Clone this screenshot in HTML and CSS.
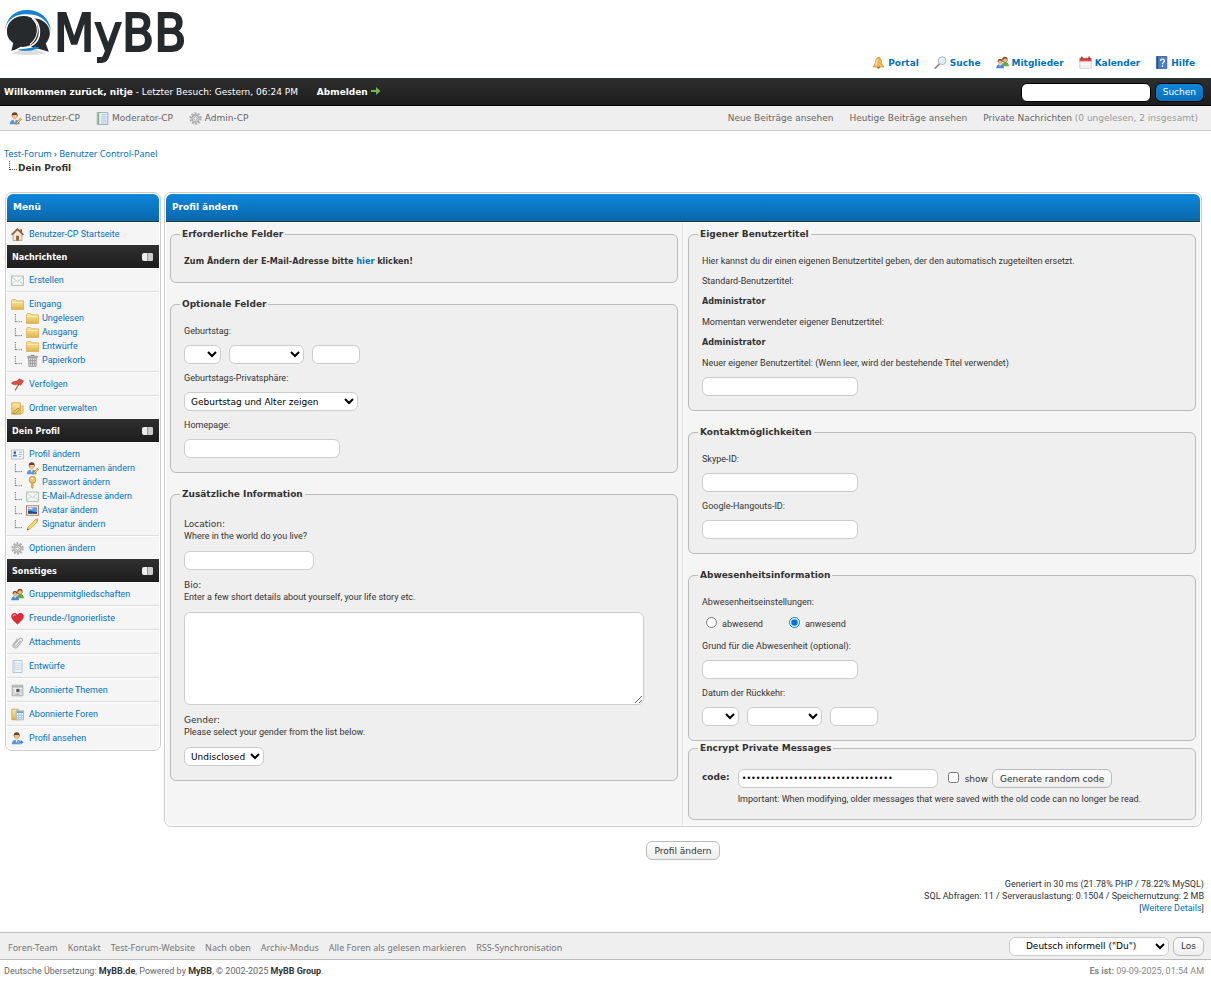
FILE: index.html
```html
<!DOCTYPE html>
<html lang="de">
	<head>
		<meta charset="UTF-8" />
		<meta name="viewport" content="width=device-width, initial-scale=1.0" />
		<title>Test-Forum - Profil ändern</title>
		<link rel="stylesheet" href="styles.css">
	</head>
	<body>
		<svg class="sprite" aria-hidden="true">
			<linearGradient id="gold" x2="0" y2="1"><stop offset="0" stop-color="#fbe9a4" /><stop offset="1" stop-color="#e0b54c" /></linearGradient>
			<symbol id="bell" viewBox="0 0 16 16">
				<circle cx="8" cy="2.4" r="1.4" fill="#d99a2b" />
				<path d="M8 2C4.800 2 4.400 5 4 8.500 3.700 11 1.500 12 1.200 13.500h13.600C14.500 12 12.300 11 12 8.500 11.600 5 11.200 2 8 2z" fill="#eab75a" stroke="#c48d34" stroke-width=".8" />
				<path d="M6.300 4C5.600 6 5.800 9 4.800 11.500" fill="none" stroke="#fff0c4" stroke-width="1.300" />
				<path d="M6 13.800a2 1.700 0 0 0 4 0z" fill="#6d5130" />
			</symbol>
			<symbol id="search" viewBox="0 0 16 16">
				<path d="M6.500 10 1.500 15" stroke="#9a8f86" stroke-width="2.200" stroke-linecap="round" />
				<circle cx="10" cy="5.800" r="4.800" fill="#dfeefa" stroke="#a5b3c2" stroke-width="1.200" />
				<path d="M7.300 5.500a3 3 0 0 1 3-2.600" fill="none" stroke="#fff" stroke-width="1.300" />
			</symbol>
			<symbol id="group" viewBox="0 0 16 16">
				<path d="M7.500 11C7.500 8.500 9 7.500 11.500 7.500S15.800 9 15.800 12.500H7.500z" fill="#65a74b" />
				<circle cx="11" cy="4.300" r="3.300" fill="#8a5225" />
				<circle cx="11.200" cy="5.200" r="2.200" fill="#f0c08c" />
				<path d="M.3 15.200C.3 11.500 2 10 5 10s4.800 1.500 4.800 5.200z" fill="#4c86cf" />
				<path d="m4 10.200 1 3 1-3z" fill="#fff" />
				<circle cx="5" cy="6.600" r="3" fill="#6b3b18" />
				<circle cx="5" cy="7.600" r="2.300" fill="#eebb88" />
			</symbol>
			<symbol id="calendar" viewBox="0 0 16 16">
				<path d="M1 6h14v9H1z" fill="#f7f7f7" stroke="#b9b9b9" stroke-width=".8" />
				<path d="M.6 2.300h14.800v4.200H.6z" fill="#d8474a" />
				<path d="M3.500.500v3.500M12.500.500v3.500" stroke="#7c2f31" stroke-width="1.600" />
				<path d="M3 9h10M3 12h10" stroke="#eee" stroke-width="1.200" />
			</symbol>
			<symbol id="help" viewBox="0 0 16 16">
				<path d="M2 .5h12.500v15H2z" fill="#4b7fc7" stroke="#30589b" />
				<path d="M2 .5h2v15H2z" fill="#28508f" />
				<path d="M6.800 6c0-3 4.700-3 4.700-.2C11.500 8 9.200 7.700 9.200 10M9.200 11.500v1.600" fill="none" stroke="#fff" stroke-width="1.600" />
			</symbol>
			<symbol id="user" viewBox="0 0 16 16">
				<path d="M1 15c0-4 2-5.500 6-5.500S13 11 13 15z" fill="#5b95da" />
				<path d="m5.700 9.500 1.300 4 1.300-4z" fill="#fff" />
				<circle cx="7" cy="4" r="3.600" fill="#6b4420" />
				<path d="M4.200 3.800h5.600C10.200 7.500 9 9.300 7 9.300S3.800 7.500 4.200 3.800z" fill="#f0bf8d" />
			</symbol>
			<symbol id="user-edit" viewBox="0 0 16 16">
				<use href="#user" />
				<path d="m14 7.500 1.500 1.300-5 5.500-2 1 .7-2.300z" fill="#f2cf55" stroke="#967521" stroke-width=".7" />
			</symbol>
			<symbol id="user-go" viewBox="0 0 16 16">
				<use href="#user" />
				<path d="M9 11.300h3V9.500l3.700 3-3.700 3v-1.900H9z" fill="#2c81d6" stroke="#fff" stroke-width=".4" />
			</symbol>
			<symbol id="modcp" viewBox="0 0 16 16">
				<path d="M1.500.5h13v15h-13z" fill="#eaf1fb" stroke="#8d9bab" />
				<path d="M2 1h2v14H2z" fill="#8bb181" />
				<path d="M6 3.500h7M6 6h7M6 8.500h7M6 11h7M6 13.500h7" stroke="#9fb8d8" />
			</symbol>
			<symbol id="gear" viewBox="0 0 16 16">
				<circle cx="8" cy="8" r="6.300" fill="none" stroke="#aaa" stroke-width="2.600" stroke-dasharray="2.300 1.658" />
				<circle cx="8" cy="8" r="4.300" fill="#ddd" stroke="#aaa" stroke-width="1.600" />
				<circle cx="8" cy="8" r="1.900" fill="#fff" stroke="#999" />
			</symbol>
			<symbol id="home" viewBox="0 0 16 16">
				<path d="M11.500 1.500h2v4h-2z" fill="#8b4a2c" />
				<path d="M2.500 8 8 2.500 13.500 8v7.500h-11z" fill="#f1e6d4" stroke="#9b8468" stroke-width=".8" />
				<path d="M.7 8.500 8 1.300l7.300 7.200" fill="none" stroke="#93573a" stroke-width="1.900" />
				<path d="M6.300 9.500h3.400v6H6.300z" fill="#9a5a32" />
			</symbol>
			<symbol id="mail" viewBox="0 0 16 16">
				<path d="M.5 2.500h15v11.500H.5z" fill="#f4f8f6" stroke="#9fb0ab" />
				<path d="m1 3.500 7 6 7-6M1 13l5-5M15 13l-5-5" fill="none" stroke="#b4c3be" />
			</symbol>
			<symbol id="folder" viewBox="0 0 16 16">
				<path d="M.5 14V3L1.500 2h4.500l1.200 1.500h8.300V14z" fill="url(#gold)" stroke="#d6ad57" />
				<path d="M1 5.500h14" stroke="#fff2bd" />
			</symbol>
			<symbol id="bin" viewBox="0 0 16 16">
				<path d="M6 1h4v1.500H6z" fill="#888" />
				<path d="M3 4.500h10l-.5 11h-9z" fill="#d5d5d5" stroke="#999" />
				<path d="M2 2.500h12v2H2z" fill="#bbb" stroke="#888" stroke-width=".7" />
				<path d="M5.500 5.500v9M8 5.500v9M10.500 5.500v9M4 8h8M4 11.500h8" stroke="#999" />
			</symbol>
			<symbol id="flag" viewBox="0 0 16 16">
				<path d="M11.500 5 5 15.300" stroke="#9b7655" stroke-width="1.600" />
				<path d="M.5 6.500C3.500 3 6 5.500 9 2.300L10.500 1 15.500 3.500 12 9C9.500 6.500 5 10.500.5 6.500z" fill="#dc4b45" stroke="#b43935" stroke-width=".6" />
			</symbol>
			<symbol id="folder-edit" viewBox="0 0 16 16">
				<path d="M1 1h10.500v14H1z" fill="url(#gold)" stroke="#cfa048" />
				<path d="M11.500 6 15 4.500V13l-3.500 2z" fill="#f5d98e" stroke="#cfa048" stroke-width=".8" />
				<path d="m8.500 7.500 1.500 1.500-4.500 5-2.300.8.700-2.300z" fill="#f7e178" stroke="#8a6e2a" stroke-width=".8" />
			</symbol>
			<symbol id="card" viewBox="0 0 16 16">
				<path d="M.5 2.500h15v11H.5z" fill="#f2f6fb" stroke="#a8b4c2" />
				<circle cx="4.700" cy="5.700" r="1.600" fill="#3a5e92" />
				<path d="M2 10.500c0-3.500 5.500-3.500 5.500 0z" fill="#3f74b8" />
				<path d="M9.500 5.500h4M9.500 8h4M9.500 10.500h3" stroke="#98a9bd" />
			</symbol>
			<symbol id="key" viewBox="0 0 16 16">
				<path d="M6.700 7.500h2.600l.2 2-1 1 1 1-1 1.200.5 1.300L8 15.500 6.700 14z" fill="#e3b34a" stroke="#af8228" stroke-width=".6" />
				<circle cx="8" cy="4.600" r="4.200" fill="#ecc364" stroke="#b48932" stroke-width=".8" />
				<ellipse cx="8" cy="3" rx="1.500" ry="1" fill="#fff" />
			</symbol>
			<symbol id="picture" viewBox="0 0 16 16">
				<path d="M.7 2.200h14.600v11.600H.7z" fill="#fff" stroke="#b48262" stroke-width="1.400" />
				<path d="M2.500 4h11v8h-11z" fill="#5b9ce0" />
				<path d="M2.500 9C6 7 9 11 13.500 9.500V12h-11z" fill="#27477e" />
				<path d="M3 6c2-1.500 4-.5 5 0" stroke="#e8f4ff" stroke-width="1.500" fill="none" />
			</symbol>
			<symbol id="pencil" viewBox="0 0 16 16">
				<path d="M12 1.500 14.700 4 5 13.500 1.300 15 2.500 11.200z" fill="#f6dc62" stroke="#b3922f" stroke-width=".8" />
				<path d="m11.500 2 1.500-1.300c1-.5 2.500.8 2 2L14 4z" fill="#df8f85" />
				<path d="m1.300 15 .6-2 1.400 1.300z" fill="#444" />
			</symbol>
			<symbol id="heart" viewBox="0 0 16 16">
				<path d="M8 15C5 12 .7 9 .7 5.300.7 1 6.300.5 8 4c1.700-3.500 7.300-3 7.300 1.300C15.300 9 11 12 8 15z" fill="#dc2b3a" stroke="#b41e2c" stroke-width=".7" />
				<path d="M2.500 5.500C2.500 3.500 4.500 3 5.700 4" stroke="#f7a2a8" fill="none" stroke-width="1.400" />
			</symbol>
			<symbol id="clip" viewBox="0 0 16 16">
				<path d="M12 5.500 6.500 12c-1.300 1.400-3.300 0-2.200-1.600L10 3.500c2-2.300 5.500.3 3.700 2.700L8 13.300c-2.700 3-7.300.2-4.900-3.500L8 3.500" fill="none" stroke="#b0b0b0" stroke-width="1.300" />
			</symbol>
			<symbol id="draft" viewBox="0 0 16 16">
				<path d="M2.500.5h11v15h-11z" fill="#f1f6fd" stroke="#a4b6cd" />
				<path d="M4 4h8M4 6.500h8M4 9h8M4 11.500h8" stroke="#c3d3e6" />
				<path d="M4.500 1v14" stroke="#c8d4e2" />
			</symbol>
			<symbol id="threads" viewBox="0 0 16 16">
				<path d="M1.500 1.500h13v13h-13z" fill="#f3f3f3" stroke="#9a9a9a" />
				<path d="M2 3.500h12" stroke="#9f9f9f" stroke-width="1.500" />
				<path d="M6.500 6h4v4h-4z" fill="#555" />
				<path d="M3.500 6v7M5 11.500h6M12.500 6v7M5 13h6" stroke="#b5b5b5" />
			</symbol>
			<symbol id="forums" viewBox="0 0 16 16">
				<path d="M1 1.500h8v13H1z" fill="url(#gold)" stroke="#cfa048" />
				<path d="M6.500 3.500h9v11h-9z" fill="#fff" stroke="#8faac9" />
				<path d="M7 5h8" stroke="#5a9bd6" stroke-width="2" />
				<path d="M9.500 6v8M7 9h8M12.500 6v8M7 12h8" stroke="#8fb8de" />
			</symbol>
			<symbol id="branch" viewBox="0 0 10 10">
				<path d="M1.500 0v9M2 8.500h7" fill="none" stroke="#555" stroke-dasharray="1 1" />
			</symbol>
			<symbol id="toggle" viewBox="0 0 11 8">
				<rect width="11" height="8" rx="2" fill="#eee" />
				<path d="M5.500 0v8" stroke="#999" />
				<path d="M6 0h3q2 0 2 2v4q0 2-2 2H6z" fill="#ccc" />
			</symbol>
		</svg>

		<header>
			<div class="top">
				<a href="#" class="logo">
					<svg viewBox="5 10 47 47" aria-hidden="true">
						<ellipse cx="28" cy="52" rx="19" ry="3" fill="#ddd" />
						<path d="m12 43-4 12c6-1 8-3 12-5h16l12 4-3-12z" fill="#fff" />
						<path d="M6 32C7 19 16 12 27 12s22 7 23 20C46 20 38 16 27 16 17 16 9 21 6 32z" fill="#1583d0" />
						<path d="M34 20c8 0 15 6 15 14 0 4-2 8-4 10l3 8-10-3c-4 0-6-1-9-3z" fill="#262a2c" />
						<path d="M24 17C14 17 7 24 7 32c0 5 2 9 6 12l-2 8c4-.5 7-2 10-4 11 1 18-6 18-15 0-8-5-16-15-16z" fill="#262a2c" stroke="#fff" stroke-width="1.500" />
						<path d="M32 20c7 6 7 18-2 25" fill="none" stroke="#fff" />
						<path d="M18 50c3 1 6 1 10 1s8-1 11-3l-4-1c-5 2-11 2-17 3z" fill="#1583d0" />
					</svg>
					<span>MyBB</span>
				</a>
				<nav class="top_links">
					<a href="#"><svg><use href="#bell" /></svg>Portal</a>
					<a href="#"><svg><use href="#search" /></svg>Suche</a>
					<a href="#"><svg><use href="#group" /></svg>Mitglieder</a>
					<a href="#"><svg><use href="#calendar" /></svg>Kalender</a>
					<a href="#"><svg><use href="#help" /></svg>Hilfe</a>
				</nav>
			</div>
			<div class="welcome">
				<div>
					<strong>Willkommen zurück, nitje</strong> - Letzter Besuch: Gestern, 06:24 PM
					<a href="#" class="logout">Abmelden <svg viewBox="0 0 10 8"><path d="M0 3h5V0l4.500 4L5 8V5H0z" fill="#75b35c" /></svg></a>
				</div>
				<form class="quick_search">
					<input type="text" aria-label="Suchbegriff" />
					<button type="button">Suchen</button>
				</form>
			</div>
			<div class="panel_links">
				<nav class="left">
					<a href="#"><svg><use href="#user-edit" /></svg>Benutzer-CP</a>
					<a href="#"><svg><use href="#modcp" /></svg>Moderator-CP</a>
					<a href="#"><svg><use href="#gear" /></svg>Admin-CP</a>
				</nav>
				<nav class="right">
					<a href="#">Neue Beiträge ansehen</a>
					<a href="#">Heutige Beiträge ansehen</a>
					<span><a href="#">Private Nachrichten</a> (0 ungelesen, 2 insgesamt)</span>
				</nav>
			</div>
		</header>

		<nav class="breadcrumb">
			<a href="#">Test-Forum</a> › <a href="#">Benutzer Control-Panel</a>
			<div class="active"><svg><use href="#branch" /></svg>Dein Profil</div>
		</nav>

		<div class="content">
			<nav class="box menu">
				<div class="thead">Menü</div>
				<ul>
					<li><a href="#"><svg><use href="#home" /></svg>Benutzer-CP Startseite</a></li>
				</ul>
				<div class="tcat">Nachrichten <svg><use href="#toggle" /></svg></div>
				<ul>
					<li><a href="#"><svg><use href="#mail" /></svg>Erstellen</a></li>
					<li>
						<a href="#"><svg><use href="#folder" /></svg>Eingang</a>
						<a href="#" class="sub"><svg class="branch"><use href="#branch" /></svg><svg><use href="#folder" /></svg>Ungelesen</a>
						<a href="#" class="sub"><svg class="branch"><use href="#branch" /></svg><svg><use href="#folder" /></svg>Ausgang</a>
						<a href="#" class="sub"><svg class="branch"><use href="#branch" /></svg><svg><use href="#folder" /></svg>Entwürfe</a>
						<a href="#" class="sub"><svg class="branch"><use href="#branch" /></svg><svg><use href="#bin" /></svg>Papierkorb</a>
					</li>
					<li><a href="#"><svg><use href="#flag" /></svg>Verfolgen</a></li>
					<li><a href="#"><svg><use href="#folder-edit" /></svg>Ordner verwalten</a></li>
				</ul>
				<div class="tcat">Dein Profil <svg><use href="#toggle" /></svg></div>
				<ul>
					<li>
						<a href="#"><svg><use href="#card" /></svg>Profil ändern</a>
						<a href="#" class="sub"><svg class="branch"><use href="#branch" /></svg><svg><use href="#user-edit" /></svg>Benutzernamen ändern</a>
						<a href="#" class="sub"><svg class="branch"><use href="#branch" /></svg><svg><use href="#key" /></svg>Passwort ändern</a>
						<a href="#" class="sub"><svg class="branch"><use href="#branch" /></svg><svg><use href="#mail" /></svg>E-Mail-Adresse ändern</a>
						<a href="#" class="sub"><svg class="branch"><use href="#branch" /></svg><svg><use href="#picture" /></svg>Avatar ändern</a>
						<a href="#" class="sub"><svg class="branch"><use href="#branch" /></svg><svg><use href="#pencil" /></svg>Signatur ändern</a>
					</li>
					<li><a href="#"><svg><use href="#gear" /></svg>Optionen ändern</a></li>
				</ul>
				<div class="tcat">Sonstiges <svg><use href="#toggle" /></svg></div>
				<ul>
					<li><a href="#"><svg><use href="#group" /></svg>Gruppenmitgliedschaften</a></li>
					<li><a href="#"><svg><use href="#heart" /></svg>Freunde-/Ignorierliste</a></li>
					<li><a href="#"><svg><use href="#clip" /></svg>Attachments</a></li>
					<li><a href="#"><svg><use href="#draft" /></svg>Entwürfe</a></li>
					<li><a href="#"><svg><use href="#threads" /></svg>Abonnierte Themen</a></li>
					<li><a href="#"><svg><use href="#forums" /></svg>Abonnierte Foren</a></li>
					<li><a href="#"><svg><use href="#user-go" /></svg>Profil ansehen</a></li>
				</ul>
			</nav>

			<form class="profile">
				<div class="box">
					<div class="thead">Profil ändern</div>
					<div class="columns">
						<div class="column">
							<fieldset>
								<legend>Erforderliche Felder</legend>
								<p><strong>Zum Ändern der E-Mail-Adresse bitte <a href="#">hier</a> klicken!</strong></p>
							</fieldset>
							<fieldset>
								<legend>Optionale Felder</legend>
								<label for="bday1">Geburtstag:</label>
								<div class="date">
									<select id="bday1" class="day"><option></option></select>
									<select class="month" aria-label="Geburtsmonat"><option></option></select>
									<input type="text" class="year" aria-label="Geburtsjahr" />
								</div>
								<label for="privacy">Geburtstags-Privatsphäre:</label>
								<select id="privacy" class="privacy"><option>Geburtstag und Alter zeigen</option></select>
								<label for="website">Homepage:</label>
								<input type="text" id="website" />
							</fieldset>
							<fieldset class="custom">
								<legend>Zusätzliche Information</legend>
								<label for="location"><span>Location:</span>Where in the world do you live?</label>
								<input type="text" id="location" class="short" />
								<label for="bio"><span>Bio:</span>Enter a few short details about yourself, your life story etc.</label>
								<textarea id="bio"></textarea>
								<label for="gender"><span>Gender:</span>Please select your gender from the list below.</label>
								<select id="gender" class="gender"><option>Undisclosed</option></select>
							</fieldset>
						</div>
						<div class="column">
							<fieldset>
								<legend>Eigener Benutzertitel</legend>
								<p>Hier kannst du dir einen eigenen Benutzertitel geben, der den automatisch zugeteilten ersetzt.</p>
								<p>Standard-Benutzertitel:</p>
								<p><strong>Administrator</strong></p>
								<p>Momentan verwendeter eigener Benutzertitel:</p>
								<p><strong>Administrator</strong></p>
								<label for="usertitle">Neuer eigener Benutzertitel: (Wenn leer, wird der bestehende Titel verwendet)</label>
								<input type="text" id="usertitle" />
							</fieldset>
							<fieldset>
								<legend>Kontaktmöglichkeiten</legend>
								<label for="skype">Skype-ID:</label>
								<input type="text" id="skype" />
								<label for="google">Google-Hangouts-ID:</label>
								<input type="text" id="google" />
							</fieldset>
							<fieldset class="away">
								<legend>Abwesenheitsinformation</legend>
								<p>Abwesenheitseinstellungen:</p>
								<div class="radios">
									<label><input type="radio" name="away" />abwesend</label>
									<label><input type="radio" name="away" checked />anwesend</label>
								</div>
								<label for="reason">Grund für die Abwesenheit (optional):</label>
								<input type="text" id="reason" />
								<label for="awayday">Datum der Rückkehr:</label>
								<div class="date">
									<select id="awayday" class="day"><option></option></select>
									<select class="month" aria-label="Monat der Rückkehr"><option></option></select>
									<input type="text" class="year" aria-label="Jahr der Rückkehr" />
								</div>
							</fieldset>
							<fieldset class="encrypt">
								<legend>Encrypt Private Messages</legend>
								<label for="code" class="code_label">code:</label>
								<div class="code_row">
									<input type="password" id="code" value="0123456789abcdef0123456789abcdef" />
									<label class="show"><input type="checkbox" />show</label>
									<button type="button">Generate random code</button>
								</div>
								<p>Important: When modifying, older messages that were saved with the old code can no longer be read.</p>
							</fieldset>
						</div>
					</div>
				</div>
				<div class="submit"><button type="button">Profil ändern</button></div>
			</form>
		</div>

		<div class="debug">
			Generiert in 30 ms (21.78% PHP / 78.22% MySQL)<br />
			SQL Abfragen: 11 / Serverauslastung: 0.1504 / Speichernutzung: 2 MB<br />
			[<a href="#">Weitere Details</a>]
		</div>

		<footer>
			<div class="footer_bar">
				<nav>
					<a href="#">Foren-Team</a>
					<a href="#">Kontakt</a>
					<a href="#">Test-Forum-Website</a>
					<a href="#">Nach oben</a>
					<a href="#">Archiv-Modus</a>
					<a href="#">Alle Foren als gelesen markieren</a>
					<a href="#">RSS-Synchronisation</a>
				</nav>
				<form>
					<select class="language" aria-label="Sprache"><option>Deutsch informell ("Du")</option></select>
					<button type="button">Los</button>
				</form>
			</div>
			<div class="copyright">
				<span>Deutsche Übersetzung: <a href="#">MyBB.de</a>, Powered by <a href="#">MyBB</a>, © 2002-2025 <a href="#">MyBB Group</a>.</span>
				<span class="time"><strong>Es ist:</strong> 09-09-2025, 01:54 AM</span>
			</div>
		</footer>
	</body>
</html>
```
FILE: styles.css
```css
* {
	box-sizing: border-box;
}
body {
	margin: 0;
	background: #fff;
	color: #333;
	font: 9px/12px "DejaVu Sans", Verdana, sans-serif;
}
a {
	color: #0072bc;
	text-decoration: none;
}
svg {
	width: 13px;
	height: 13px;
	flex: none;
}
.sprite {
	position: absolute;
	width: 0;
	height: 0;
}
input,
select,
textarea,
button {
	margin: 0;
	border: 1px solid #ccc;
	border-radius: 6px;
	background: #fff;
	color: #000;
	font: 9px/12px "DejaVu Sans", Verdana, sans-serif;
}
input[type="text"],
input[type="password"],
select,
button {
	height: 19px;
}
input {
	padding: 0 3px;
}
select {
	padding: 0 2px;
}
button {
	padding: 0 7px;
	border-color: #bbb;
	background: linear-gradient(#fff, #eee);
	color: #333;
}

/* header */
.top {
	display: flex;
	justify-content: space-between;
	align-items: flex-end;
	height: 78px;
	padding: 0 16px 9px 4px;
}
.logo {
	display: flex;
	align-self: flex-start;
	gap: 1px;
	padding-top: 8px;
	color: #262a2c;
	font: 52px/50px "DejaVu Sans Condensed", Tahoma, sans-serif;
}
.logo span {
	-webkit-text-stroke: 2px #262a2c;
}
.logo svg {
	width: 49px;
	height: 49px;
}
.top_links {
	display: flex;
	gap: 15px;
	font-weight: bold;
}
.top_links a,
.panel_links .left a {
	display: flex;
	align-items: center;
	gap: 3px;
}
.welcome {
	display: flex;
	justify-content: space-between;
	align-items: center;
	height: 28px;
	padding: 0 7px 0 4px;
	border-top: 1px solid #263c30;
	border-bottom: 1px solid #000;
	background: linear-gradient(#2e2e2e, #1d1d1d);
	color: #fff;
}
.logout {
	margin-left: 16px;
	color: #fff;
	font-weight: bold;
}
.logout svg {
	width: 10px;
	height: 8px;
}
.quick_search {
	display: flex;
	gap: 4px;
}
.quick_search input {
	width: 130px;
	border-color: #000;
}
.quick_search button {
	border-color: #000;
	background: linear-gradient(#0f86d8, #0a6fb8);
	color: #fff;
}
.panel_links {
	display: flex;
	justify-content: space-between;
	align-items: center;
	height: 25px;
	padding: 0 13px 0 9px;
	border-bottom: 1px solid #ccc;
	background: #efefef;
	color: #999;
}
.panel_links a {
	color: #666;
}
.panel_links .left,
.panel_links .right {
	display: flex;
	gap: 16px;
}
.breadcrumb {
	padding: 16px 4px 17px;
	font: 9px/14px "Noto Sans", Tahoma, sans-serif;
}
.active {
	display: flex;
	padding-left: 4px;
	font: bold 9px/14px "DejaVu Sans", Verdana, sans-serif;
}
.active svg {
	width: 10px;
	height: 10px;
}

/* boxes */
.content {
	display: flex;
	align-items: flex-start;
	gap: 3px;
	padding: 0 9px 0 5px;
}
.box {
	padding: 1px;
	border: 1px solid #ccc;
	border-radius: 7px;
}
.thead {
	height: 28px;
	padding: 0 6px;
	border-bottom: 1px solid #263c30;
	border-radius: 6px 6px 0 0;
	background: linear-gradient(#0f87dc, #0a66ab);
	color: #fff;
	font: bold 9px/27px "DejaVu Sans", Verdana, sans-serif;
}
.menu {
	flex: none;
	width: 156px;
	font: 9px/14px Roboto, Tahoma, sans-serif;
}
.tcat {
	display: flex;
	justify-content: space-between;
	align-items: center;
	height: 23px;
	padding: 0 6px 0 5px;
	background: linear-gradient(#303030, #1d1d1d);
	color: #fff;
	font: bold 9px/14px "DejaVu Sans Condensed", Tahoma, sans-serif;
}
.tcat svg {
	width: 11px;
	height: 8px;
}
.menu ul {
	margin: 0;
	padding: 0;
	list-style: none;
}
.menu li {
	padding: 5px 4px 4px;
	border-bottom: 1px solid #ddd;
	background: #f5f5f5;
	box-shadow: inset 0 1px #fff;
}
.menu li:last-child {
	border-bottom: 0;
}
.menu ul:last-child li:last-child {
	border-radius: 0 0 6px 6px;
}
.menu li a {
	display: flex;
	align-items: center;
	gap: 5px;
}
.menu .sub {
	gap: 3px;
	padding-left: 3px;
}
.menu .branch {
	width: 9px;
	height: 9px;
}

/* profile form */
.profile {
	flex: 1;
}
.columns {
	display: grid;
	grid-template-columns: 1fr 1fr;
	background: #f5f5f5;
	border-top: 1px solid #fff;
	border-radius: 0 0 6px 6px;
}
.column {
	padding: 5px 4px;
}
.column:first-child {
	border-right: 1px solid #ddd;
}
.column + .column {
	border-left: 1px solid #fff;
}
fieldset {
	display: flex;
	flex-direction: column;
	align-items: flex-start;
	gap: 8px;
	margin: 0 0 15px;
	padding: 14px 13px;
	border: 1px solid #bbb;
	border-radius: 6px;
	background: #efefef;
	font: 9px/12px Roboto, Tahoma, sans-serif;
}
fieldset:last-child {
	margin-bottom: 0;
}
legend {
	margin-left: -4px;
	padding: 0 2px;
	font: bold 9px/13px "DejaVu Sans", Verdana, sans-serif;
}
fieldset p {
	margin: 0;
}
fieldset strong {
	display: block;
	font: bold 9px/13px "DejaVu Sans Condensed", Tahoma, sans-serif;
}
fieldset input[type="text"] {
	width: 156px;
}
.date {
	display: flex;
	gap: 8px;
}
.date .day {
	width: 37px;
}
.date .month {
	width: 75px;
}
.date input.year {
	width: 48px;
}
.privacy {
	width: 174px;
}
.custom {
	gap: 9px;
	padding-top: 17px;
}
.custom span {
	display: block;
	font: 9px/12px "DejaVu Sans", Verdana, sans-serif;
}
.custom input.short {
	width: 130px;
}
.custom textarea {
	width: 460px;
	max-width: 100%;
	height: 93px;
}
.gender {
	width: 80px;
}
.away {
	margin-bottom: 1px;
}
.radios {
	display: flex;
	gap: 22px;
	height: 16px;
}
.radios label {
	display: flex;
	align-items: center;
	gap: 5px;
}
input[type="radio"],
input[type="checkbox"] {
	width: 11px;
	height: 11px;
	margin: 0 0 3px;
	accent-color: #0078d7;
}
.radios input[type="radio"] {
	margin-left: 4px;
}
.encrypt {
	display: grid;
	grid-template-columns: auto 1fr;
	gap: 5px 8px;
}
.code_label {
	padding-top: 2px;
	font: bold 9px/12px "DejaVu Sans", Verdana, sans-serif;
}
.code_row {
	display: flex;
	gap: 4px;
}
.code_row input[type="password"] {
	width: 200px;
	font-size: 8px;
}
.encrypt p {
	grid-column: 2;
}
.show {
	display: flex;
	align-items: center;
	gap: 6px;
	margin-left: 6px;
	font: 9px/12px "DejaVu Sans", Verdana, sans-serif;
}
.submit {
	padding-top: 14px;
	text-align: center;
}

/* footer */
.debug {
	padding: 18px 7px;
	font: 9px/12px Roboto, Tahoma, sans-serif;
	text-align: right;
}
.footer_bar {
	display: flex;
	justify-content: space-between;
	align-items: center;
	height: 28px;
	padding: 0 7px 0 8px;
	border-top: 1px solid #bbb;
	border-bottom: 1px solid #bbb;
	background: #efefef;
}
.footer_bar nav {
	display: flex;
	gap: 10px;
	padding-top: 3px;
	font: 9px/12px "Noto Sans", Tahoma, sans-serif;
}
.footer_bar nav a {
	color: #777;
}
.footer_bar form {
	display: flex;
	gap: 4px;
}
.language {
	width: 160px;
	padding-left: 12px;
}
.copyright {
	display: flex;
	justify-content: space-between;
	padding: 5px 7px 5px 4px;
	color: #666;
	font: 9px/12px Roboto, Tahoma, sans-serif;
}
.copyright a {
	color: #333;
	font-weight: bold;
}
.time {
	color: #888;
}
```
